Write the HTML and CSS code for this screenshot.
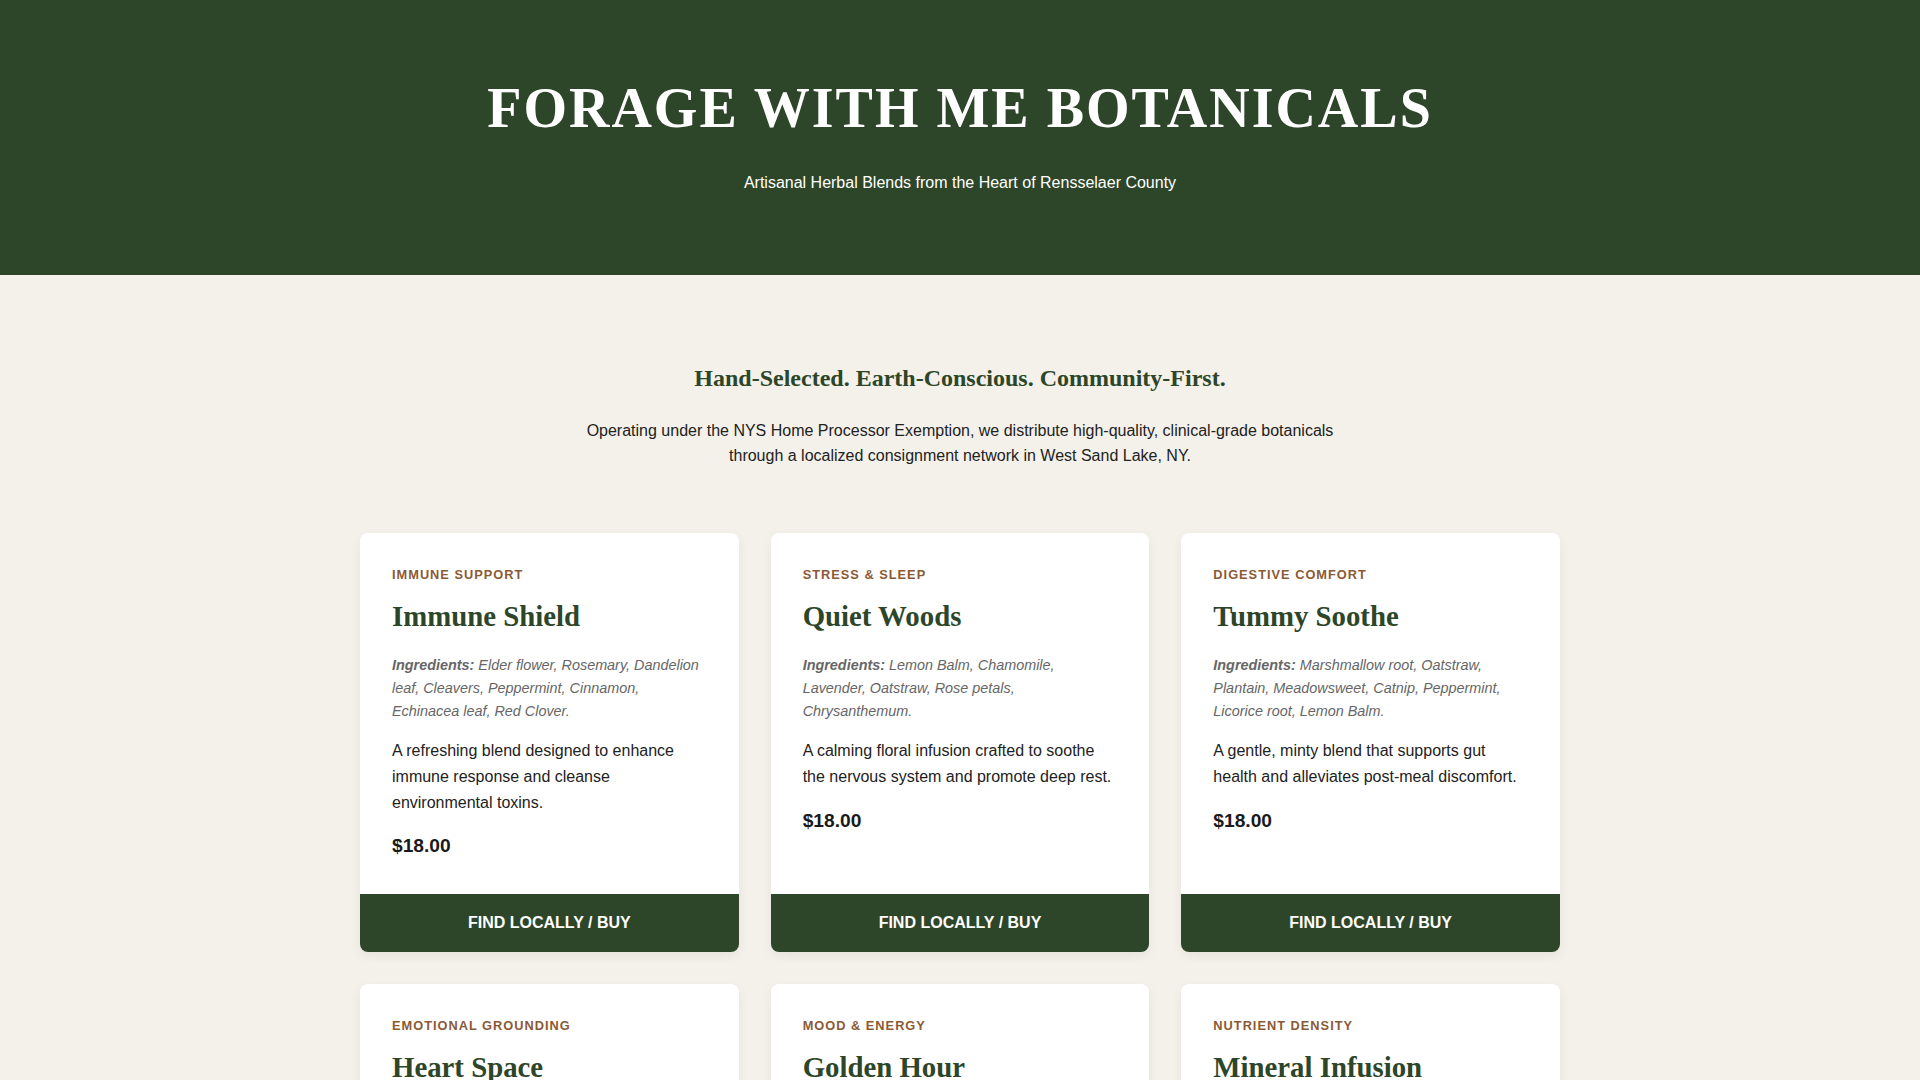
FILE: index.html
```html
<!DOCTYPE html>
<html lang="en">
<head>
<meta charset="utf-8">
<title>Forage With Me Botanicals</title>
<link rel="stylesheet" href="styles.css">
</head>
<body>
<header class="site-header">
  <h1 class="site-title">FORAGE WITH ME BOTANICALS</h1>
  <p class="site-tagline">Artisanal Herbal Blends from the Heart of Rensselaer County</p>
</header>
<main class="main">
  <section class="intro">
    <h2 class="intro-title">Hand-Selected. Earth-Conscious. Community-First.</h2>
    <p class="intro-text">Operating under the NYS Home Processor Exemption, we distribute high-quality, clinical-grade botanicals through a localized consignment network in West Sand Lake, NY.</p>
  </section>
  <section class="grid">
    <article class="card">
      <div class="card-body">
        <div class="card-cat">Immune Support</div>
        <h3 class="card-title">Immune Shield</h3>
        <p class="card-ingr"><strong>Ingredients:</strong> Elder flower, Rosemary, Dandelion leaf, Cleavers, Peppermint, Cinnamon, Echinacea leaf, Red Clover.</p>
        <p class="card-desc">A refreshing blend designed to enhance immune response and cleanse environmental toxins.</p>
        <div class="card-price">$18.00</div>
      </div>
      <a class="card-btn" href="#">Find Locally / Buy</a>
    </article>
    <article class="card">
      <div class="card-body">
        <div class="card-cat">Stress &amp; Sleep</div>
        <h3 class="card-title">Quiet Woods</h3>
        <p class="card-ingr"><strong>Ingredients:</strong> Lemon Balm, Chamomile, Lavender, Oatstraw, Rose petals, Chrysanthemum.</p>
        <p class="card-desc">A calming floral infusion crafted to soothe the nervous system and promote deep rest.</p>
        <div class="card-price">$18.00</div>
      </div>
      <a class="card-btn" href="#">Find Locally / Buy</a>
    </article>
    <article class="card">
      <div class="card-body">
        <div class="card-cat">Digestive Comfort</div>
        <h3 class="card-title">Tummy Soothe</h3>
        <p class="card-ingr"><strong>Ingredients:</strong> Marshmallow root, Oatstraw, Plantain, Meadowsweet, Catnip, Peppermint, Licorice root, Lemon Balm.</p>
        <p class="card-desc">A gentle, minty blend that supports gut health and alleviates post-meal discomfort.</p>
        <div class="card-price">$18.00</div>
      </div>
      <a class="card-btn" href="#">Find Locally / Buy</a>
    </article>
    <article class="card">
      <div class="card-body">
        <div class="card-cat">Emotional Grounding</div>
        <h3 class="card-title">Heart Space</h3>
        <p class="card-ingr"><strong>Ingredients:</strong> Hawthorn, Rose petals, Tulsi, Lemon Balm, Linden, Oatstraw.</p>
        <p class="card-desc">A heart-opening blend to ground emotions and encourage calm connection.</p>
        <div class="card-price">$18.00</div>
      </div>
      <a class="card-btn" href="#">Find Locally / Buy</a>
    </article>
    <article class="card">
      <div class="card-body">
        <div class="card-cat">Mood &amp; Energy</div>
        <h3 class="card-title">Golden Hour</h3>
        <p class="card-ingr"><strong>Ingredients:</strong> Lemon Balm, Calendula, Peppermint, Rosemary, Holy Basil, Orange peel.</p>
        <p class="card-desc">A bright, uplifting infusion to lift the spirits and support steady energy.</p>
        <div class="card-price">$18.00</div>
      </div>
      <a class="card-btn" href="#">Find Locally / Buy</a>
    </article>
    <article class="card">
      <div class="card-body">
        <div class="card-cat">Nutrient Density</div>
        <h3 class="card-title">Mineral Infusion</h3>
        <p class="card-ingr"><strong>Ingredients:</strong> Nettle, Oatstraw, Red Clover, Alfalfa, Horsetail, Raspberry leaf.</p>
        <p class="card-desc">A deeply nourishing blend rich in minerals to support whole-body vitality.</p>
        <div class="card-price">$18.00</div>
      </div>
      <a class="card-btn" href="#">Find Locally / Buy</a>
    </article>
  </section>
</main>
</body>
</html>
```
FILE: styles.css
```css
* { box-sizing: border-box; }
html, body { margin: 0; padding: 0; }
body {
  background: #f4f1ea;
  color: #222222;
  font-family: "Liberation Sans", Arial, sans-serif;
  font-size: 16px;
  line-height: 1.6;
}
.site-header {
  background: #2d4629;
  color: #ffffff;
  text-align: center;
  padding: 64px 32px;
}
.site-title {
  margin: 0;
  font-family: "Liberation Serif", "Times New Roman", serif;
  font-size: 56px;
  font-weight: 700;
  letter-spacing: 2px;
}
.site-tagline {
  margin: 16px 0;
  font-size: 16px;
}
.main {
  padding: 64px 32px;
}
.intro {
  text-align: center;
  margin: 0 auto 64px;
  max-width: 800px;
}
.intro-title {
  font-family: "Liberation Serif", "Times New Roman", serif;
  font-size: 24px;
  font-weight: 700;
  color: #2d4629;
  margin: 20px 0;
}
.intro-text {
  margin: 0;
  color: #222222;
}
.grid {
  max-width: 1200px;
  margin: 0 auto;
  display: grid;
  grid-template-columns: repeat(3, 1fr);
  gap: 32px;
}
.card {
  background: #ffffff;
  border-radius: 8px;
  box-shadow: 0 4px 12px rgba(0, 0, 0, 0.06);
  display: flex;
  flex-direction: column;
  overflow: hidden;
}
.card-body {
  padding: 32px;
  flex: 1;
}
.card-cat {
  font-size: 12.8px;
  font-weight: 700;
  letter-spacing: 1px;
  text-transform: uppercase;
  color: #8b5a34;
  margin-bottom: 8px;
}
.card-title {
  font-family: "Liberation Serif", "Times New Roman", serif;
  font-size: 28.8px;
  font-weight: 700;
  color: #2d4629;
  margin: 0 0 15px;
}
.card-ingr {
  font-size: 14.4px;
  font-style: italic;
  color: #666666;
  margin: 0 0 15px;
}
.card-ingr strong { font-weight: 700; }
.card-desc {
  margin: 0 0 16px;
  color: #222222;
}
.card-price {
  font-size: 19.2px;
  font-weight: 700;
  color: #1a1a1a;
}
.card-btn {
  display: block;
  background: #2d4629;
  color: #ffffff;
  text-align: center;
  text-decoration: none;
  text-transform: uppercase;
  font-weight: 700;
  padding: 16px;
}
```
